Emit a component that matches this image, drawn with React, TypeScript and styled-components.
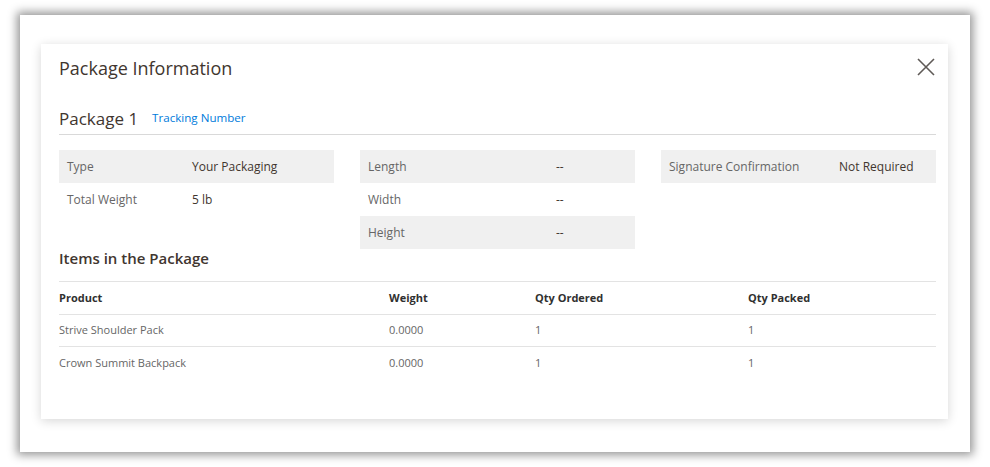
import React from "react";
import styled, { createGlobalStyle } from "styled-components";

const Global = createGlobalStyle`
  html, body { margin: 0; padding: 0; background: #ffffff; }
  body { font-family: "Open Sans", "Liberation Sans", sans-serif; color: #303030; }
  * { box-sizing: border-box; }
`;

const Page = styled.div`
  padding: 15px 0 15px 20px;
`;

const Frame = styled.div`
  width: 950px;
  height: 437px;
  background: #fff;
  box-shadow: 0 0 9px 3px rgba(0, 0, 0, 0.42);
  padding: 29px 0 0 21px;
`;

const Modal = styled.div`
  width: 907px;
  height: 375px;
  background: #fff;
  box-shadow: 0 2px 10px rgba(0, 0, 0, 0.16);
  padding: 14px 12px 0 18px;
  display: flex;
  flex-direction: column;
`;

const Header = styled.div`
  display: flex;
  align-items: flex-start;
  justify-content: space-between;
  height: 24px;
`;

const Title = styled.h1`
  margin: -2px 0 0;
  font-size: 18px;
  font-weight: 400;
  color: #41362f;
  line-height: 24px;
`;

const CloseButton = styled.button`
  border: 0;
  background: none;
  padding: 0;
  width: 18px;
  height: 18px;
  margin: 0 1px 0 0;
  display: flex;
  align-items: center;
  justify-content: center;
  cursor: pointer;
`;

const PackageHead = styled.div`
  margin-top: 25px;
  display: flex;
  align-items: center;
  gap: 14px;
  padding-bottom: 3px;
  border-bottom: 1px solid #d9d9d9;
`;

const PackageTitle = styled.h2`
  margin: 0;
  font-size: 17px;
  font-weight: 400;
  color: #41362f;
  line-height: 24px;
`;

const TrackLink = styled.a`
  font-size: 11.6px;
  line-height: 16px;
  margin-top: -2px;
  color: #007bdb;
  text-decoration: none;
`;

const InfoGrid = styled.div`
  margin-top: 15px;
  display: grid;
  grid-template-columns: 275px 275px 275px;
  column-gap: 26px;
  align-items: start;
`;

const InfoTable = styled.div`
  display: flex;
  flex-direction: column;
`;

const InfoRow = styled.div<{ $shaded: boolean; $labelWidth: number }>`
  display: grid;
  grid-template-columns: ${(p) => p.$labelWidth}px 1fr;
  height: 33px;
  align-items: center;
  padding: 0 0 1px 8px;
  background: ${(p) => (p.$shaded ? "#f0f0f0" : "transparent")};
  font-size: 12px;
`;

const Label = styled.span`
  color: #666;
`;

const Value = styled.span`
  color: #41362f;
`;

const SectionTitle = styled.h3`
  margin: -1px 0 0;
  font-size: 15px;
  font-weight: 600;
  color: #41362f;
  line-height: 20px;
`;

const ItemsTable = styled.div`
  margin-top: 13px;
  border-top: 1px solid #e3e3e3;
`;

const ItemRow = styled.div<{ $head?: boolean }>`
  display: grid;
  grid-template-columns: 330px 146px 213px 1fr;
  height: ${(p) => (p.$head ? 33 : 32)}px;
  padding-bottom: 2px;
  align-items: center;
  border-bottom: 1px solid #e3e3e3;
  font-size: 11px;
  font-weight: ${(p) => (p.$head ? 700 : 400)};
  color: ${(p) => (p.$head ? "#303030" : "#666")};
  &:last-child {
    border-bottom: 0;
  }
`;

type Info = { label: string; value: string };

const tables: { labelWidth: number; rows: Info[] }[] = [
  {
    labelWidth: 125,
    rows: [
      { label: "Type", value: "Your Packaging" },
      { label: "Total Weight", value: "5 lb" },
    ],
  },
  {
    labelWidth: 188,
    rows: [
      { label: "Length", value: "--" },
      { label: "Width", value: "--" },
      { label: "Height", value: "--" },
    ],
  },
  {
    labelWidth: 170,
    rows: [{ label: "Signature Confirmation", value: "Not Required" }],
  },
];

const items = [
  ["Strive Shoulder Pack", "0.0000", "1", "1"],
  ["Crown Summit Backpack", "0.0000", "1", "1"],
];

export default function App() {
  return (
    <>
      <Global />
      <Page>
        <Frame>
          <Modal>
            <Header>
              <Title>Package Information</Title>
              <CloseButton aria-label="Close">
                <svg width="18" height="18" viewBox="0 0 18 18">
                  <path d="M1 1 L17 17 M17 1 L1 17" stroke="#5f5a57" strokeWidth="1.6" fill="none" />
                </svg>
              </CloseButton>
            </Header>
            <PackageHead>
              <PackageTitle>Package 1</PackageTitle>
              <TrackLink href="#">Tracking Number</TrackLink>
            </PackageHead>
            <InfoGrid>
              {tables.map((t, i) => (
                <InfoTable key={i}>
                  {t.rows.map((r, j) => (
                    <InfoRow key={r.label} $shaded={j % 2 === 0} $labelWidth={t.labelWidth}>
                      <Label>{r.label}</Label>
                      <Value>{r.value}</Value>
                    </InfoRow>
                  ))}
                </InfoTable>
              ))}
            </InfoGrid>
            <SectionTitle>Items in the Package</SectionTitle>
            <ItemsTable>
              <ItemRow $head>
                <span>Product</span>
                <span>Weight</span>
                <span>Qty Ordered</span>
                <span>Qty Packed</span>
              </ItemRow>
              {items.map((it) => (
                <ItemRow key={it[0]}>
                  {it.map((c, k) => (
                    <span key={k}>{c}</span>
                  ))}
                </ItemRow>
              ))}
            </ItemsTable>
          </Modal>
        </Frame>
      </Page>
    </>
  );
}
